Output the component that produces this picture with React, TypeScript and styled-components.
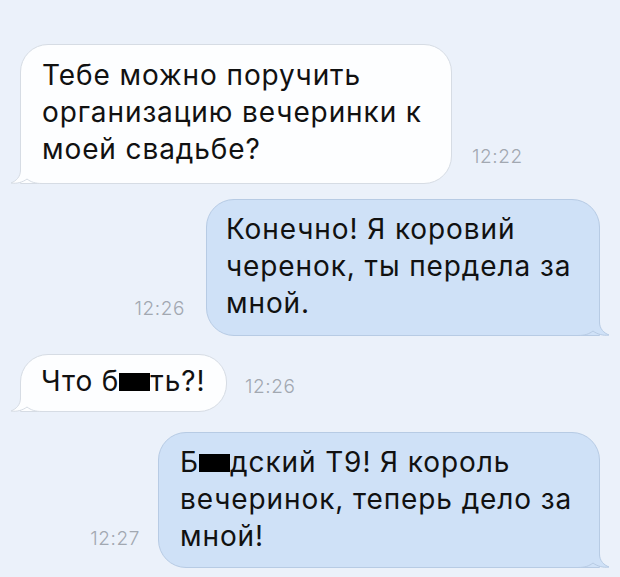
import React from "react";
import styled, { createGlobalStyle } from "styled-components";

type Side = "in" | "out";

const GlobalStyle = createGlobalStyle`
  html, body {
    margin: 0;
    padding: 0;
    background: #ebf1fa;
  }
  body {
    font-family: Inter, "Liberation Sans", Arial, sans-serif;
    -webkit-font-smoothing: antialiased;
  }
`;

const Chat = styled.div`
  display: flex;
  flex-direction: column;
  padding: 44px 20px 10px 20px;
  width: 620px;
  height: 577px;
  box-sizing: border-box;
  overflow: hidden;
`;

const Row = styled.div<{ $side: Side; $gap: number }>`
  display: flex;
  align-items: flex-end;
  justify-content: ${(p) => (p.$side === "in" ? "flex-start" : "flex-end")};
  margin-top: ${(p) => p.$gap}px;
`;

const Bubble = styled.div<{ $side: Side; $width: number; $pad: string }>`
  position: relative;
  box-sizing: border-box;
  width: ${(p) => p.$width}px;
  padding: ${(p) => p.$pad};
  font-size: 28px;
  line-height: 37px;
  letter-spacing: 0.9px;
  color: #111;
  white-space: nowrap;
  background: ${(p) => (p.$side === "in" ? "#fdfeff" : "#cfe1f7")};
  border: 1px solid ${(p) => (p.$side === "in" ? "#d6dce4" : "#b7cbe4")};
  border-radius: 28px;
  ${(p) =>
    p.$side === "in"
      ? "border-bottom-left-radius: 0;"
      : "border-bottom-right-radius: 0;"}
`;

const Text = styled.span`
  position: relative;
`;

const Censor = styled.span`
  display: inline-block;
  width: 31px;
  height: 18px;
  background: #000;
`;

const Time = styled.div<{ $side: Side; $lift: number; $space: number }>`
  font-size: 19px;
  font-weight: 300;
  letter-spacing: 0.6px;
  color: #a2a8b1;
  line-height: 22px;
  margin-bottom: ${(p) => p.$lift}px;
  ${(p) =>
    p.$side === "in"
      ? `margin-left: ${p.$space}px;`
      : `margin-right: ${p.$space}px;`}
`;

const TailSvg = styled.svg<{ $side: Side }>`
  position: absolute;
  bottom: -1px;
  width: 32px;
  height: 27px;
  overflow: visible;
  ${(p) =>
    p.$side === "in"
      ? "left: -11px;"
      : "right: -11px; transform: scaleX(-1);"}
`;

const Tail: React.FC<{ side: Side }> = ({ side }) => {
  const fill = side === "in" ? "#fdfeff" : "#cfe1f7";
  const stroke = side === "in" ? "#d6dce4" : "#b7cbe4";
  return (
    <TailSvg $side={side} viewBox="0 0 32 27">
      <path
        d="M10.5 0 L10.5 13 C10.5 20 6 24 1 26 C7 27 13 25 17 22 C21 25 25 26.5 32 26.5 L32 0 Z"
        fill={fill}
      />
      <path
        d="M10.5 0 L10.5 13 C10.5 20 6 24 1 26 C7 27 13 25 17 22 C21 25 25 26.5 32 26.5"
        fill="none"
        stroke={stroke}
        strokeWidth={1}
      />
    </TailSvg>
  );
};

export default function App() {
  return (
    <>
      <GlobalStyle />
      <Chat>
        <Row $side="in" $gap={0}>
          <Bubble $side="in" $width={432} $pad="12px 20px 15px 21px">
            <Tail side="in" />
            <Text>
              Тебе можно поручить
              <br />
              организацию вечеринки к
              <br />
              моей свадьбе?
            </Text>
          </Bubble>
          <Time $side="in" $lift={16} $space={20}>
            12:22
          </Time>
        </Row>

        <Row $side="out" $gap={15}>
          <Time $side="out" $lift={16} $space={21}>
            12:26
          </Time>
          <Bubble $side="out" $width={394} $pad="11px 20px 13px 19px">
            <Tail side="out" />
            <Text>
              Конечно! Я коровий
              <br />
              черенок, ты пердела за
              <br />
              мной.
            </Text>
          </Bubble>
        </Row>

        <Row $side="in" $gap={18}>
          <Bubble $side="in" $width={207} $pad="8px 18px 11px 20px">
            <Tail side="in" />
            <Text>
              Что б<Censor />ть?!
            </Text>
          </Bubble>
          <Time $side="in" $lift={14} $space={18}>
            12:26
          </Time>
        </Row>

        <Row $side="out" $gap={20}>
          <Time $side="out" $lift={18} $space={18}>
            12:27
          </Time>
          <Bubble $side="out" $width={442} $pad="11px 20px 12px 21px">
            <Tail side="out" />
            <Text>
              Б<Censor />дский Т9! Я король
              <br />
              вечеринок, теперь дело за
              <br />
              мной!
            </Text>
          </Bubble>
        </Row>
      </Chat>
    </>
  );
}
